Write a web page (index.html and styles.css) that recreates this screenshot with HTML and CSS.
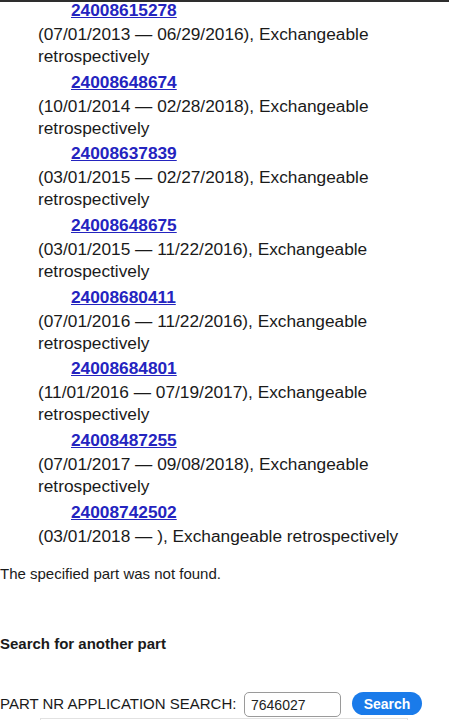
FILE: index.html
```html
<!DOCTYPE html>
<html lang="en">
<head>
    <meta charset="UTF-8">
    <title>Part search</title>
    <meta name="viewport" content="width=device-width,initial-scale=1">
    <link rel="stylesheet" href="styles.css">
</head>
<body>
    <div class="top-edge"></div>

    <!--替换件列表-->
    <div class="part-list">
        <div class="part-item">
            <a class="part-link" href="#">24008615278</a>
            <p>(07/01/2013 — 06/29/2016), Exchangeable retrospectively</p>
        </div>
        <div class="part-item">
            <a class="part-link" href="#">24008648674</a>
            <p>(10/01/2014 — 02/28/2018), Exchangeable retrospectively</p>
        </div>
        <div class="part-item">
            <a class="part-link" href="#">24008637839</a>
            <p>(03/01/2015 — 02/27/2018), Exchangeable retrospectively</p>
        </div>
        <div class="part-item">
            <a class="part-link" href="#">24008648675</a>
            <p>(03/01/2015 — 11/22/2016), Exchangeable retrospectively</p>
        </div>
        <div class="part-item">
            <a class="part-link" href="#">24008680411</a>
            <p>(07/01/2016 — 11/22/2016), Exchangeable retrospectively</p>
        </div>
        <div class="part-item">
            <a class="part-link" href="#">24008684801</a>
            <p>(11/01/2016 — 07/19/2017), Exchangeable retrospectively</p>
        </div>
        <div class="part-item">
            <a class="part-link" href="#">24008487255</a>
            <p>(07/01/2017 — 09/08/2018), Exchangeable retrospectively</p>
        </div>
        <div class="part-item">
            <a class="part-link" href="#">24008742502</a>
            <p>(03/01/2018 — ), Exchangeable retrospectively</p>
        </div>
    </div>

    <p class="not-found">The specified part was not found.</p>

    <h3 class="search-title">Search for another part</h3>

    <!--搜索栏-->
    <form class="search-form">
        <label for="part-nr">PART NR APPLICATION SEARCH:</label>
        <input type="text" id="part-nr" value="7646027">
        <button type="button">Search</button>
    </form>
    <div class="suggest-box"></div>
</body>
</html>
```

FILE: styles.css
```css
*{
    padding: 0;
    margin: 0;
}
html,body{
    width: 100%;
    height: 100%;
}
body{
    font-family: "Liberation Sans",Arial,sans-serif;
    background-color: #fff;
    color: #1a1a1a;
    overflow: hidden;
}
.top-edge{
    height: 2px;
    background-color: #2e2e2e;
}
.part-list{
    margin-top: -5px;
    padding-left: 38px;
    padding-right: 40px;
}
.part-item{
    font-size: 17.3px;
    padding-bottom: 1.7px;
}
.part-link{
    display: block;
    margin-left: 33px;
    height: 26px;
    line-height: 26px;
    color: #2424bf;
    font-weight: 700;
    text-decoration: underline;
}
.part-item p{
    line-height: 22px;
}
.not-found{
    margin-top: 15px;
    font-size: 15px;
    line-height: 20px;
}
.search-title{
    margin-top: 50px;
    font-size: 15px;
    line-height: 20px;
    font-weight: 700;
}
.search-form{
    margin-top: 37px;
    display: flex;
    align-items: center;
    height: 26px;
}
.search-form label{
    font-size: 15px;
    width: 244px;
}
.search-form input{
    width: 97px;
    height: 25px;
    box-sizing: border-box;
    border: 1px solid #9a9a9a;
    border-radius: 5px;
    padding: 0 6px;
    font-family: "Liberation Sans",Arial,sans-serif;
    font-size: 14px;
    color: #222;
    margin-top: 2px;
}
.search-form button{
    margin-left: 11px;
    width: 70px;
    height: 23px;
    border: none;
    border-radius: 12px;
    background-color: #1a7bea;
    color: #fff;
    font-family: "Liberation Sans",Arial,sans-serif;
    font-size: 14px;
    font-weight: 700;
}
.suggest-box{
    margin: 1px 41px 0 40px;
    height: 10px;
    border: 1px solid #e2e2e2;
    border-bottom: none;
}
```
